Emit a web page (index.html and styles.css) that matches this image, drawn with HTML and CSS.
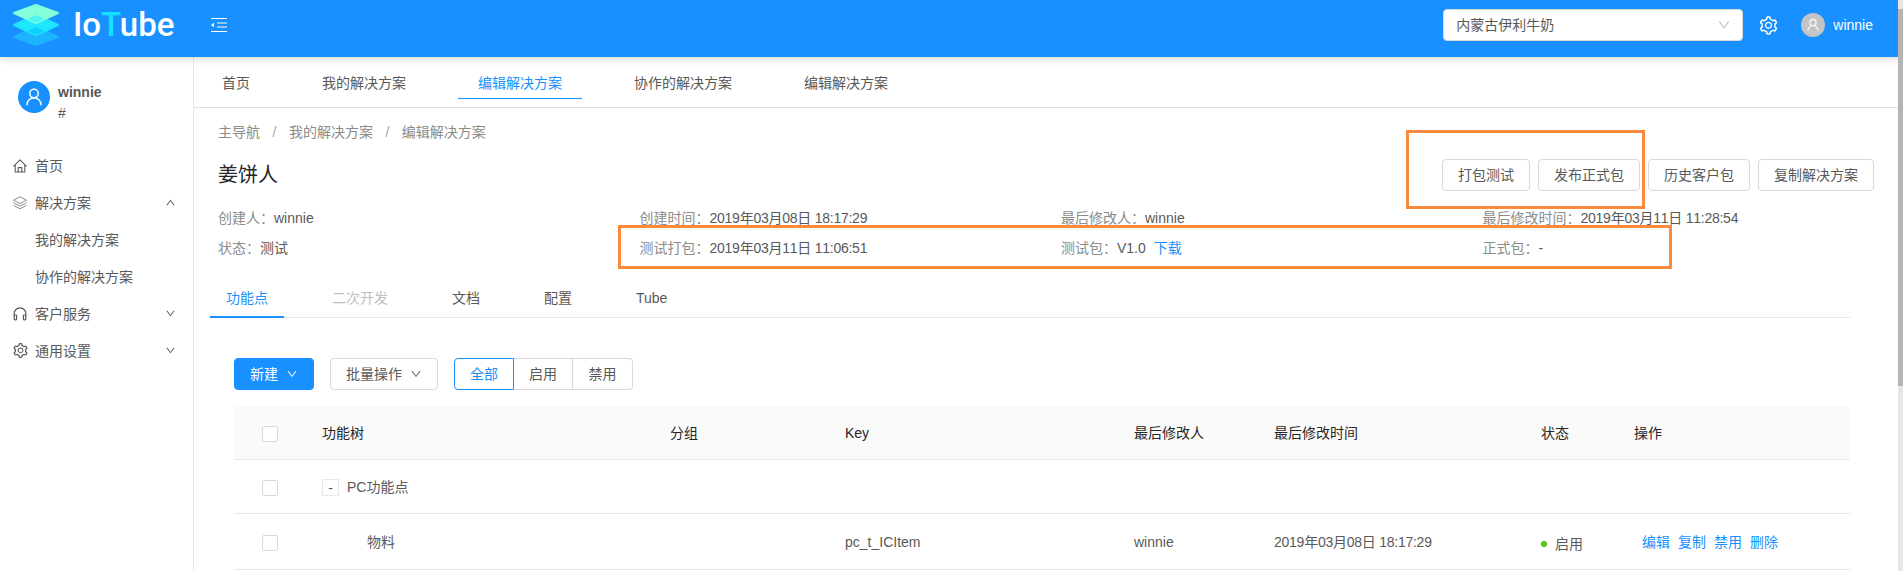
FILE: index.html
```html
<!DOCTYPE html>
<html lang="zh-CN">
<head>
<meta charset="utf-8">
<title>IoTube</title>
<link rel="stylesheet" href="styles.css">
</head>
<body>
<svg class="sprite" xmlns="http://www.w3.org/2000/svg">
  <symbol id="i-down" viewBox="0 0 1024 1024"><path fill="currentColor" d="M884 256h-75c-5.1 0-9.9 2.5-12.9 6.6L512 654.2 227.9 262.6c-3-4.1-7.8-6.6-12.9-6.6h-75c-6.5 0-10.3 7.4-6.5 12.7l352.6 486.1c12.8 17.6 39 17.6 51.7 0l352.6-486.1c3.9-5.3.1-12.7-6.4-12.7z"/></symbol>
  <symbol id="i-gear" viewBox="0 0 1024 1024"><path fill="currentColor" d="M924.8 625.7l-65.5-56c3.1-19 4.7-38.4 4.7-57.8s-1.6-38.8-4.7-57.8l65.5-56a32.03 32.03 0 0 0 9.3-35.2l-.9-2.6a443.74 443.74 0 0 0-79.7-137.9l-1.8-2.1a32.12 32.12 0 0 0-35.1-9.5l-81.3 28.9c-30-24.6-63.5-44-99.7-57.6l-15.7-85a32.05 32.05 0 0 0-25.8-25.7l-2.7-.5c-52.1-9.4-106.9-9.4-159 0l-2.7.5a32.05 32.05 0 0 0-25.8 25.7l-15.8 85.4a351.86 351.86 0 0 0-99 57.4l-81.9-29.1a32 32 0 0 0-35.1 9.5l-1.8 2.1a446.02 446.02 0 0 0-79.7 137.9l-.9 2.6c-4.5 12.5-.8 26.5 9.3 35.2l66.3 56.6c-3.1 18.8-4.6 38-4.6 57.1 0 19.2 1.5 38.4 4.6 57.1L99 625.5a32.03 32.03 0 0 0-9.3 35.2l.9 2.6c18.1 50.4 44.9 96.9 79.7 137.9l1.8 2.1a32.12 32.12 0 0 0 35.1 9.5l81.9-29.1c29.8 24.5 63.1 43.9 99 57.4l15.8 85.4a32.05 32.05 0 0 0 25.8 25.7l2.7.5a449.4 449.4 0 0 0 159 0l2.7-.5a32.05 32.05 0 0 0 25.8-25.7l15.7-85a350 350 0 0 0 99.7-57.6l81.3 28.9a32 32 0 0 0 35.1-9.5l1.8-2.1c34.8-41.1 61.6-87.5 79.7-137.9l.9-2.6c4.5-12.3.8-26.3-9.3-35zM788.3 465.9c2.5 15.1 3.8 30.6 3.8 46.1s-1.3 31-3.8 46.1l-6.6 40.1 74.7 63.9a370.03 370.03 0 0 1-42.6 73.6L721 702.8l-31.4 25.8c-23.9 19.6-50.5 35-79.3 45.8l-38.1 14.3-17.9 97a377.5 377.5 0 0 1-85 0l-17.9-97.2-37.8-14.5c-28.5-10.8-55-26.2-78.7-45.7l-31.4-25.9-93.4 33.2c-17-22.9-31.2-47.6-42.6-73.6l75.5-64.5-6.5-40c-2.4-14.9-3.7-30.3-3.7-45.5 0-15.3 1.2-30.6 3.7-45.5l6.5-40-75.5-64.5c11.3-26.1 25.6-50.7 42.6-73.6l93.4 33.2 31.4-25.9c23.7-19.5 50.2-34.9 78.7-45.7l37.9-14.3 17.9-97.2c28.1-3.2 56.8-3.2 85 0l17.9 97 38.1 14.3c28.7 10.8 55.4 26.2 79.3 45.8l31.4 25.8 92.8-32.9c17 22.9 31.2 47.6 42.6 73.6L781.8 426l6.5 39.9zM512 326c-97.2 0-176 78.8-176 176s78.8 176 176 176 176-78.8 176-176-78.8-176-176-176zm79.2 255.2A111.6 111.6 0 0 1 512 614c-29.9 0-58-11.7-79.2-32.8A111.6 111.6 0 0 1 400 502c0-29.9 11.7-58 32.8-79.2C454 401.6 482.1 390 512 390c29.9 0 58 11.6 79.2 32.8A111.6 111.6 0 0 1 624 502c0 29.9-11.7 58-32.8 79.2z"/></symbol>
  <symbol id="i-user" viewBox="0 0 24 24"><g fill="none" stroke="currentColor" stroke-width="1.6" stroke-linecap="round"><circle cx="12" cy="8.2" r="4.6"/><path d="M4.4 20.4c0-4.2 3.4-7.6 7.6-7.6s7.6 3.4 7.6 7.6"/></g></symbol>
  <symbol id="i-home" viewBox="0 0 14 14"><g fill="none" stroke="currentColor" stroke-width="1.1" stroke-linejoin="round"><path d="M.4 7.4 7 .9l6.600 6.500"/><path d="M2.200 6v7h9.600V6"/><path d="M5.200 13V8.600h3.600V13"/></g></symbol>
  <symbol id="i-layers" viewBox="0 0 14 14"><g fill="none" stroke="currentColor" stroke-width="1" stroke-linejoin="round"><path d="M7 .8 13.400 4.200 7 7.600 .6 4.200z"/><path d="M.6 6.800 7 10.200l6.400-3.400"/><path d="M.6 9.400 7 12.800l6.400-3.400"/></g></symbol>
  <symbol id="i-phones" viewBox="0 0 14 14"><g fill="none" stroke="currentColor" stroke-width="1.200" stroke-linejoin="round"><path d="M1.200 9V6.600a5.800 5.800 0 0 1 11.600 0V9"/><rect x="1.200" y="8" width="2.400" height="4.800" rx=".7"/><rect x="10.400" y="8" width="2.400" height="4.800" rx=".7"/></g></symbol>
</svg>

<header class="topbar">
  <svg class="logo" viewBox="-1 -1 46 42" aria-hidden="true">
    <path class="ly3" d="M22 22 44 32 22 40 0 32z"/>
    <path class="ly2" d="M22 10 44 20 22 30 0 20z"/>
    <path class="ly1" d="M22 0 44 8 22 18 0 8z"/>
    <path class="ly4" d="M22 10 30.800 14 22 18 13.200 14z"/>
    <path class="ly5" d="M22 22 30.800 26 22 30 13.200 26z"/>
  </svg>
  <div class="brand">Io<span class="brand-t">T</span>ube</div>
  <svg class="fold" viewBox="0 0 16 14" aria-hidden="true">
    <path d="M0 .5h16M6 5h10M6 9h10M0 13.500h16" stroke="#fff" stroke-width="1.2" fill="none"/>
    <path d="M0 7 3 4.800v4.400z" fill="#fff"/>
  </svg>
  <div class="top-right">
    <div class="select">
      <span>内蒙古伊利牛奶</span>
      <svg class="select-arrow"><use href="#i-down"/></svg>
    </div>
    <svg class="gear"><use href="#i-gear"/></svg>
    <span class="top-avatar"><svg><use href="#i-user"/></svg></span>
    <span class="top-name">winnie</span>
  </div>
</header>

<div class="shell">
  <aside class="side">
    <div class="profile">
      <span class="avatar"><svg><use href="#i-user"/></svg></span>
      <div class="who">
        <div class="who-name">winnie</div>
        <div class="who-sub">#</div>
      </div>
    </div>
    <nav class="menu">
      <div class="menu-item"><svg class="mi"><use href="#i-home"/></svg>首页</div>
      <div class="menu-item"><svg class="mi mi-light"><use href="#i-layers"/></svg>解决方案<svg class="caret flip"><use href="#i-down"/></svg></div>
      <div class="menu-item"><span class="mi"></span>我的解决方案</div>
      <div class="menu-item"><span class="mi"></span>协作的解决方案</div>
      <div class="menu-item"><svg class="mi"><use href="#i-phones"/></svg>客户服务<svg class="caret"><use href="#i-down"/></svg></div>
      <div class="menu-item"><svg class="mi mi-gear"><use href="#i-gear"/></svg>通用设置<svg class="caret"><use href="#i-down"/></svg></div>
    </nav>
  </aside>

  <main class="main">
    <div class="pagetabs">
      <a class="ptab">首页</a>
      <a class="ptab">我的解决方案</a>
      <a class="ptab is-on">编辑解决方案</a>
      <a class="ptab">协作的解决方案</a>
      <a class="ptab">编辑解决方案</a>
    </div>

    <section class="head">
      <div class="crumbs">
        <span>主导航</span><i>/</i><span>我的解决方案</span><i>/</i><span>编辑解决方案</span>
      </div>
      <div class="titlerow">
        <h1>姜饼人</h1>
        <div class="actions">
          <button class="btn">打包测试</button>
          <button class="btn">发布正式包</button>
          <button class="btn">历史客户包</button>
          <button class="btn">复制解决方案</button>
        </div>
      </div>
      <div class="meta">
        <div><em>创建人<span class="cp">：</span></em>winnie</div>
        <div><em>创建时间<span class="cp">：</span></em><span class="dt">2019年03月08日 18:17:29</span></div>
        <div><em>最后修改人<span class="cp">：</span></em>winnie</div>
        <div><em>最后修改时间<span class="cp">：</span></em><span class="dt">2019年03月11日 11:28:54</span></div>
        <div><em>状态<span class="cp">：</span></em>测试</div>
        <div><em>测试打包<span class="cp">：</span></em><span class="dt">2019年03月11日 11:06:51</span></div>
        <div><em>测试包<span class="cp">：</span></em>V1.0<a class="dl">下载</a></div>
        <div><em>正式包<span class="cp">：</span></em>-</div>
      </div>
    </section>

    <div class="subtabs">
      <a class="stab is-on">功能点</a>
      <a class="stab is-off">二次开发</a>
      <a class="stab">文档</a>
      <a class="stab">配置</a>
      <a class="stab">Tube</a>
    </div>

    <div class="toolbar">
      <button class="btn btn-primary">新建<svg class="ic-btn"><use href="#i-down"/></svg></button>
      <button class="btn">批量操作<svg class="ic-btn"><use href="#i-down"/></svg></button>
      <div class="radio">
        <span class="seg is-on">全部</span><span class="seg">启用</span><span class="seg">禁用</span>
      </div>
    </div>

    <table class="grid">
      <colgroup>
        <col class="c1"><col class="c2"><col class="c3"><col class="c4"><col class="c5"><col class="c6"><col class="c7"><col class="c8">
      </colgroup>
      <thead>
        <tr>
          <th class="cb"><span class="check"></span></th>
          <th>功能树</th><th>分组</th><th>Key</th><th>最后修改人</th><th>最后修改时间</th><th>状态</th><th>操作</th>
        </tr>
      </thead>
      <tbody>
        <tr class="r1">
          <td class="cb"><span class="check"></span></td>
          <td><span class="expand">-</span>PC功能点</td>
          <td></td><td></td><td></td><td></td><td></td><td></td>
        </tr>
        <tr class="r2">
          <td class="cb"><span class="check"></span></td>
          <td class="leaf">物料</td>
          <td></td>
          <td>pc_t_ICItem</td>
          <td>winnie</td>
          <td><span class="dt">2019年03月08日 18:17:29</span></td>
          <td><span class="status"><b></b>启用</span></td>
          <td class="ops"><a>编辑</a><a>复制</a><a>禁用</a><a>删除</a></td>
        </tr>
      </tbody>
    </table>
  </main>
</div>

<div class="mark mark-a"></div>
<div class="mark mark-b"></div>
<div class="scrollbar"><div class="thumb"></div></div>
</body>
</html>
```

FILE: styles.css
```css
* { box-sizing: border-box; }
html, body { margin: 0; height: 571px; overflow: hidden; }
body {
  position: relative;
  background: #fff;
  color: #595959;
  font: 14px/22px "Liberation Sans", "Noto Sans CJK SC", sans-serif;
}
.sprite { display: none; }
a { color: inherit; text-decoration: none; }

.topbar {
  height: 57px;
  padding-bottom: 7px;
  background: #1890ff;
  display: flex;
  align-items: center;
  box-shadow: 0 2px 8px rgba(0,0,0,.15);
  position: relative;
  z-index: 2;
}
.logo { width: 46px; height: 42px; margin-left: 13px; flex: none; }
.logo path { stroke-linejoin: round; stroke-width: 2px; }
.ly1 { fill: #85ffd8; stroke: #85ffd8; }
.ly2 { fill: #1fe6ff; stroke: #1fe6ff; }
.ly3 { fill: #1cb4ff; stroke: #1cb4ff; }
.ly4 { fill: #4ff5ef; }
.ly5 { fill: #10cfff; }
.brand {
  margin-left: 14px;
  width: 123px;
  font: 500 33px/40px Roboto, sans-serif;
  color: #fff;
  flex: none;
}
.brand-t { color: #13e0ff; }
.fold { width: 16px; height: 14px; flex: none; margin-left: 15px; }
.top-right { margin-left: auto; display: flex; align-items: center; padding-right: 30px; }
.select {
  width: 300px;
  height: 32px;
  background: #fff;
  border: 1px solid #d9d9d9;
  border-radius: 4px;
  padding: 0 11px 0 12px;
  display: flex;
  align-items: center;
  justify-content: space-between;
  color: #595959;
}
.select-arrow { width: 14px; height: 14px; color: #bfbfbf; }
.gear { width: 21px; height: 21px; color: #fff; margin-left: 15px; }
.top-avatar {
  width: 24px; height: 24px; border-radius: 50%;
  background: #c4c4c4; color: #fff; margin-left: 22px;
  display: flex; align-items: center; justify-content: center;
}
.top-avatar svg { width: 16px; height: 16px; }
.top-name { color: #fff; margin-left: 8px; }

.shell { display: flex; height: 514px; }
.side { width: 194px; flex: none; border-right: 1px solid #e8e8e8; }
.profile { display: flex; padding: 24px 0 0 18px; height: 90px; }
.avatar {
  width: 32px; height: 32px; border-radius: 50%;
  background: #1890ff; color: #fff;
  display: flex; align-items: center; justify-content: center;
}
.avatar svg { width: 22px; height: 22px; }
.who { margin-left: 8px; }
.who-name { font-weight: 700; color: #595959; line-height: 22px; }
.who-sub { line-height: 20px; color: #595959; }
.menu-item {
  height: 37px;
  padding-left: 13px;
  padding-right: 17px;
  display: flex;
  align-items: center;
}
.mi { width: 14px; height: 14px; margin-right: 8px; flex: none; color: #595959; }
.mi-light { color: #8c8c8c; }
.mi-gear { width: 17px; height: 17px; margin: 0 6.5px 0 -1.5px; }
.caret { width: 11px; height: 11px; margin-left: auto; color: #595959; }
.flip { transform: rotate(180deg); }

.main { flex: 1; min-width: 0; padding-right: 53px; }
.pagetabs {
  display: flex;
  align-items: flex-end;
  height: 51px;
  margin-right: -53px;
  padding: 0 0 8px 8px;
  border-bottom: 1px solid #e0e0e0;
}
.ptab {
  height: 32px;
  padding: 0 20px;
  margin-right: 32px;
  display: flex;
  align-items: center;
  border-bottom: 1px solid transparent;
}
.ptab.is-on { color: #1890ff; border-bottom-color: #1890ff; }

.head { padding: 13px 0 0 24px; }
.crumbs { display: flex; height: 22px; align-items: center; color: #8c8c8c; }
.crumbs i { font-style: normal; margin: 0 12.5px; color: #a6a6a6; }
.titlerow {
  display: flex;
  justify-content: space-between;
  align-items: center;
  margin-top: 15px;
  height: 34px;
}
h1 { margin: 0; font-size: 20px; font-weight: 400; line-height: 28px; color: #262626; }
.actions { display: flex; gap: 8px; margin-right: -24px; }
.btn {
  height: 32px;
  padding: 0 15px;
  border: 1px solid #d9d9d9;
  border-radius: 4px;
  background: #fff;
  color: #595959;
  font: inherit;
  display: inline-flex;
  align-items: center;
  flex: none;
}
.meta {
  display: grid;
  grid-template-columns: repeat(4, 421.5px);
  grid-auto-rows: 30px;
  margin-top: 10px;
  width: 1686px;
  align-items: center;
}
.meta em { font-style: normal; color: #8c8c8c; }
.cp { font-family: "Noto Sans CJK TC", sans-serif; }
.dt { letter-spacing: -.25px; font-kerning: none; }
.dl { color: #1890ff; margin-left: 8px; }

.subtabs {
  display: flex;
  margin: 17px 0 0 16px;
  height: 39px;
  border-bottom: 1px solid #e8e8e8;
}
.stab {
  height: 39px;
  padding: 0 16px;
  margin-right: 32px;
  display: flex;
  align-items: center;
  border-bottom: 2px solid transparent;
}
.stab.is-on { color: #1890ff; border-bottom-color: #1890ff; }
.stab.is-off { color: #bfbfbf; }

.toolbar { display: flex; margin: 40px 0 16px 40px; height: 32px; }
.toolbar .btn { margin-right: 16px; }
.ic-btn { width: 12px; height: 12px; margin-left: 8px; }
.btn-primary { background: #1890ff; border-color: #1890ff; color: #fff; }
.radio { display: flex; }
.seg {
  height: 32px;
  width: 59px;
  border: 1px solid #d9d9d9;
  border-left: 0;
  display: flex;
  align-items: center;
  justify-content: center;
}
.seg:first-child { width: 60px; border: 1px solid #1890ff; border-radius: 4px 0 0 4px; color: #1890ff; }
.seg:last-child { width: 60px; border-radius: 0 4px 4px 0; }

.grid {
  border-collapse: separate;
  border-spacing: 0;
  table-layout: fixed;
  width: 1616px;
  margin-left: 40px;
}
.c1 { width: 72px; } .c2 { width: 348px; } .c3 { width: 175px; } .c4 { width: 289px; }
.c5 { width: 140px; } .c6 { width: 267px; } .c7 { width: 93px; } .c8 { width: 232px; }
.grid th, .grid td {
  padding: 0 0 0 16px;
  text-align: left;
  font-weight: 400;
  border-bottom: 1px solid #e8e8e8;
}
.grid th { background: #fafafa; color: #262626; height: 54px; }
.grid thead th:first-child { border-radius: 4px 0 0 0; }
.grid thead th:last-child { border-radius: 0 4px 0 0; }
.r1 td { height: 54px; }
.r2 td { height: 56px; }
.grid .cb { padding: 0 0 0 28px; }
.check {
  display: block;
  width: 16px; height: 16px;
  margin-top: 2px;
  border: 1px solid #d9d9d9;
  border-radius: 2px;
  background: #fff;
}
.expand {
  display: inline-flex;
  width: 17px; height: 17px;
  border: 1px solid #e8e8e8;
  align-items: center;
  justify-content: center;
  margin-right: 8px;
  vertical-align: middle;
}
.grid .leaf { padding-left: 61px; }
.status { display: inline-flex; align-items: center; position: relative; top: 1px; }
.status b { width: 6px; height: 6px; border-radius: 50%; background: #52c41a; margin-right: 8px; }
.grid .ops { padding-left: 24px; white-space: nowrap; }
.ops a { color: #1890ff; margin-right: 8px; }

.mark { position: absolute; border: 3px solid #fb8b3c; z-index: 3; pointer-events: none; }
.mark-a { left: 1406px; top: 130px; width: 239px; height: 79px; }
.mark-b { left: 618px; top: 225px; width: 1054px; height: 44px; }
.scrollbar {
  position: absolute;
  right: 0; top: 0;
  width: 5px; height: 571px;
  padding-top: 9px;
  background: #e6e6e6;
  z-index: 4;
}
.thumb { height: 377px; background: #b4b4b4; }
```
